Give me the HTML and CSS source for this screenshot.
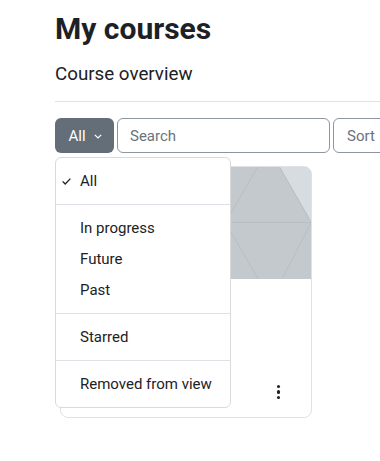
FILE: index.html
```html
<!DOCTYPE html>
<html lang="en">
<head>
  <meta charset="UTF-8" />
  <meta name="viewport" content="width=device-width, initial-scale=1.0"/>
  <title>My courses</title>
  <link rel="stylesheet" href="styles.css">
</head>
<body>
  <div class="page">
    <h1>My courses</h1>
    <h2 class="subtitle">Course overview</h2>
    <hr class="divider">

    <!-- filter, search, sort -->
    <div class="controls">
      <div class="filter">
        <button class="btn-filter">All
          <svg class="caret" width="8" height="5" viewBox="0 0 8 5"><polyline points="0.8,0.8 4,4 7.2,0.8" fill="none" stroke="#fff" stroke-width="1.2"/></svg>
        </button>
        <ul class="dropdown">
          <li class="item active">
            <svg class="check" width="9" height="7" viewBox="0 0 9 7"><polyline points="0.6,3.4 3.2,6 8.4,0.6" fill="none" stroke="#1d2125" stroke-width="1.3"/></svg>
            All
          </li>
          <li class="sep"></li>
          <li class="item">In progress</li>
          <li class="item">Future</li>
          <li class="item">Past</li>
          <li class="sep"></li>
          <li class="item">Starred</li>
          <li class="sep"></li>
          <li class="item">Removed from view</li>
        </ul>
      </div>
      <input class="search" placeholder="Search" />
      <div class="sort">Sort</div>
    </div>

    <div class="cards">
      <div class="card">
        <svg class="card-img" width="252" height="113" viewBox="0 0 252 113">
          <rect width="252" height="113" fill="#c4c9cd"/>
          <polygon points="219,0 252,0 252,57" fill="#d6dce0"/>
          <g stroke="#b8bec3" stroke-width="1" fill="none">
            <line x1="0" y1="56.5" x2="252" y2="56.5"/>
            <line x1="198" y1="0" x2="166" y2="56"/>
            <line x1="166" y1="57" x2="198" y2="113"/>
            <line x1="219" y1="0" x2="251" y2="56"/>
            <line x1="251" y1="57" x2="222" y2="113"/>
          </g>
        </svg>
        <div class="card-body">
          <span class="kebab"><i></i><i></i><i></i></span>
        </div>
      </div>
    </div>
  </div>
</body>
</html>
```

FILE: styles.css
```css
body {
  margin: 0;
  overflow: hidden;
  font-family: Roboto, "Liberation Sans", sans-serif;
  color: #1d2125;
  background: #fff;
}

.page {
  width: 420px;
  padding: 11px 0 0 55px;
}

h1 {
  font-size: 30px;
  font-weight: bold;
  line-height: 36px;
  margin: 0;
}

.subtitle {
  font-size: 18.75px;
  font-weight: normal;
  line-height: 22px;
  margin: 16px 0 0;
}

.divider {
  border: none;
  border-top: 1px solid #dee2e6;
  margin: 16px 0 0;
}

.controls {
  display: flex;
  gap: 3px;
  margin-top: 16px;
  height: 35px;
}

.filter {
  position: relative;
}

.btn-filter {
  height: 35px;
  width: 59px;
  border: none;
  border-radius: 6px;
  background: #646e78;
  color: #fff;
  font-family: inherit;
  font-size: 15px;
  padding: 0 0 0 1px;
  display: flex;
  align-items: center;
  justify-content: center;
  gap: 8px;
}
.caret {
  margin-top: 1px;
}

.search, .sort {
  height: 35px;
  box-sizing: border-box;
  border: 1px solid #8f959e;
  border-radius: 6px;
  font-family: inherit;
  font-size: 15px;
  color: #1d2125;
}
.search {
  width: 213px;
  padding: 0 12px;
}
.search::placeholder {
  color: #6a737b;
}
.sort {
  width: 80px;
  padding: 0 13px;
  display: flex;
  align-items: center;
  color: #6a737b;
}

/* filter menu lies over the course cards */
.dropdown {
  position: absolute;
  top: 39px;
  left: 0;
  width: 176px;
  box-sizing: border-box;
  margin: 0;
  padding: 7.5px 0;
  list-style: none;
  background: #fff;
  border: 1px solid #d8dadc;
  border-radius: 6px;
  z-index: 2;
}
.item {
  position: relative;
  font-size: 15px;
  line-height: 31px;
  padding-left: 24px;
  color: #1d2125;
}
.check {
  position: absolute;
  left: 6px;
  top: 12px;
}
.sep {
  height: 0;
  border-top: 1px solid #dee2e6;
  margin: 7.5px 0;
}

.cards {
  margin-top: 13px;
  padding-left: 5px;
}
.card {
  width: 252px;
  height: 252px;
  box-sizing: border-box;
  border: 1px solid #dee2e6;
  border-radius: 8px;
  overflow: hidden;
  display: flex;
  flex-direction: column;
}
.card-img {
  display: block;
  margin: -1px 0 0 -1px;
}
.card-body {
  flex: 1;
  display: flex;
  justify-content: flex-end;
  align-items: flex-end;
  padding: 0 31px 18px 0;
}
.kebab {
  display: flex;
  flex-direction: column;
  gap: 2px;
}
.kebab i {
  width: 3.5px;
  height: 3.5px;
  border-radius: 50%;
  background: #1d2125;
}
```
